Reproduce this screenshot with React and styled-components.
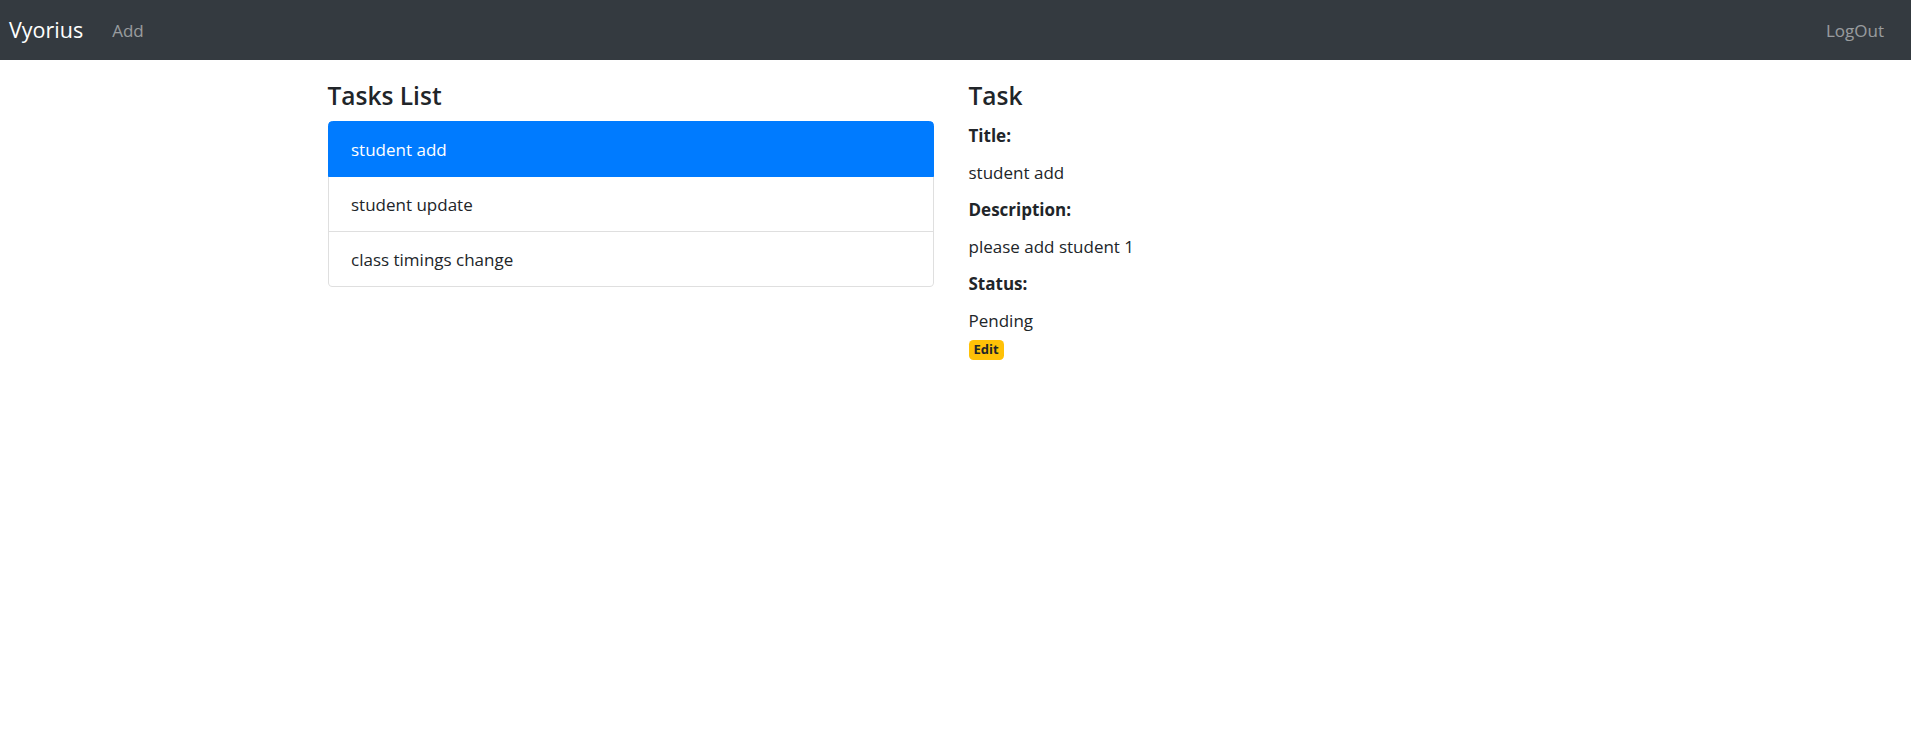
import React from "react";
import styled, { createGlobalStyle } from "styled-components";

const GlobalStyle = createGlobalStyle`
  * {
    box-sizing: border-box;
  }
  body {
    margin: 0;
    background: #fff;
    color: #212529;
    font-family: "Open Sans", "Noto Sans", sans-serif;
    font-size: 17px;
    line-height: 27px;
  }
`;

const Navbar = styled.nav`
  display: flex;
  align-items: center;
  height: 60px;
  padding: 0 18px 0 9px;
  background-color: #343a40;
`;

const Brand = styled.a`
  margin-right: 20px;
  color: #fff;
  font-size: 21.5px;
  line-height: 34px;
  text-decoration: none;
`;

const NavLink = styled.a`
  padding: 0 9px;
  color: rgba(255, 255, 255, 0.5);
  text-decoration: none;
  ${(props) => props.end && "margin-left: auto;"}
`;

const Container = styled.main`
  display: grid;
  grid-template-columns: 606px 1fr;
  column-gap: 35px;
  width: 1282px;
  margin: 20px auto 0;
  padding: 0 17px 0 13px;
`;

const Heading = styled.h4`
  margin: 0 0 9px;
  font-size: 24.5px;
  font-weight: 600;
  line-height: 32px;
`;

const ListGroup = styled.ul`
  display: flex;
  flex-direction: column;
  margin: 0;
  padding: 0;
  list-style: none;
`;

const ListItem = styled.li`
  position: relative;
  margin-bottom: -1px;
  padding: 13.5px 22.5px;
  border: 1px solid ${(props) => (props.active ? "#007bff" : "rgba(0, 0, 0, 0.125)")};
  background-color: ${(props) => (props.active ? "#007bff" : "#fff")};
  color: ${(props) => (props.active ? "#fff" : "#212529")};
  z-index: ${(props) => (props.active ? 2 : 1)};

  &:first-child {
    border-top-left-radius: 4.5px;
    border-top-right-radius: 4.5px;
  }
  &:last-child {
    margin-bottom: 0;
    border-bottom-left-radius: 4.5px;
    border-bottom-right-radius: 4.5px;
  }
`;

const Details = styled.div`
  display: flex;
  flex-direction: column;
  gap: 10px;
  padding-top: 1px;
`;

const Label = styled.strong`
  font-weight: 700;
`;

const Badge = styled.a`
  align-self: flex-start;
  margin-top: -4px;
  padding: 3.4px 5px;
  border-radius: 4.5px;
  background-color: #ffc107;
  color: #212529;
  font-size: 13px;
  font-weight: 700;
  line-height: 1;
  text-decoration: none;
`;

const tasks = ["student add", "student update", "class timings change"];

export default function App() {
  return (
    <>
      <GlobalStyle />
      <Navbar>
        <Brand href="#">Vyorius</Brand>
        <NavLink href="#">Add</NavLink>
        <NavLink href="#" end="true">
          LogOut
        </NavLink>
      </Navbar>
      <Container>
        <section>
          <Heading>Tasks List</Heading>
          <ListGroup>
            {tasks.map((t, i) => (
              <ListItem key={t} active={i === 0}>
                {t}
              </ListItem>
            ))}
          </ListGroup>
        </section>
        <section>
          <Heading>Task</Heading>
          <Details>
            <Label>Title:</Label>
            <span>student add</span>
            <Label>Description:</Label>
            <span>please add student 1</span>
            <Label>Status:</Label>
            <span>Pending</span>
            <Badge href="#">Edit</Badge>
          </Details>
        </section>
      </Container>
    </>
  );
}
